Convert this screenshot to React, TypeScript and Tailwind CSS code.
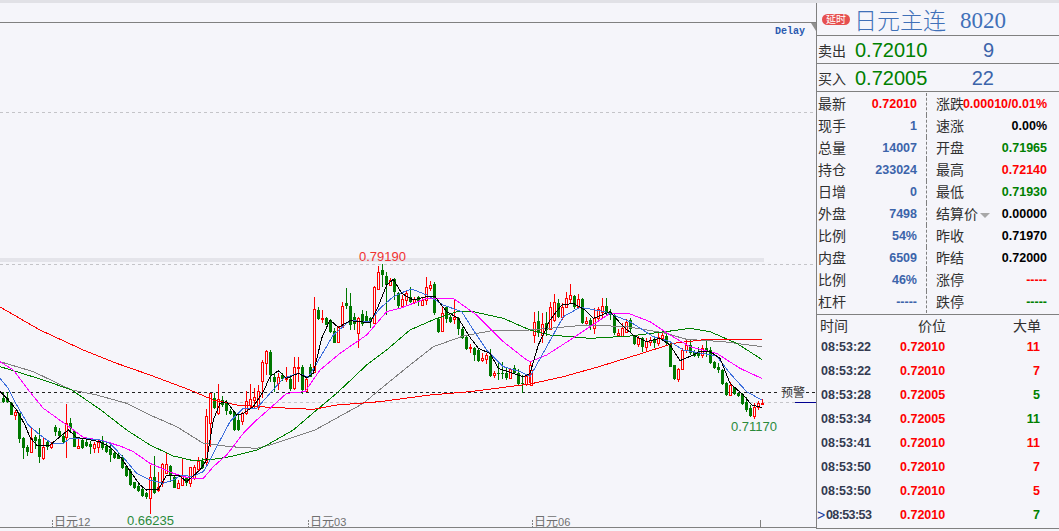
import React from 'react'

type Candle = [number, number, number, number, number, number]
type Pt = [number, number]

const cjk = '"Noto Sans CJK SC", "Liberation Sans", sans-serif'
const BG = '#f5f5fa'

// candles: [zoomX, isRed, high, bodyTop, bodyBottom, low] read from 3x crops
const panelA: Candle[] = [
  [8,0,125,145,155,158],[20,0,125,145,155,158],[32,0,155,160,195,196],[44,1,180,185,195,210],[56,0,190,190,268,278],
  [68,0,262,265,293,328],[80,0,285,292,305,318],[92,1,232,265,305,306],[104,0,255,260,272,298],[116,0,235,268,320,338],
  [128,1,262,290,325,330],[140,0,270,275,290,300],[152,1,275,283,290,298],[164,0,225,232,245,258],[176,0,235,242,258,262],
  [188,0,250,258,275,278],[199,1,162,220,262,323],[211,0,205,220,235,250],[223,0,240,243,290,292],[235,1,265,288,295,297],
  [247,0,265,270,293,296],[259,0,268,275,288,292],[271,0,272,283,290,313],[283,1,275,283,293,310],[295,1,270,275,290,310],
  [307,0,258,275,295,300],[319,0,280,288,305,308],[331,0,285,298,315,335],[343,0,305,308,325,326],[355,0,310,316,327,328],
  [367,0,315,322,355,358],[379,0,345,348,378,380],[391,0,358,362,405,408],[403,0,395,396,413,416],[415,0,398,408,423,425],
  [427,0,415,417,438,440],[439,0,425,428,442,448],[451,1,345,380,443,493],[463,0,318,380,430,432],[475,1,365,412,420,425],
  [487,1,338,342,395,410],[499,1,310,342,370,372],[511,0,345,348,375,395],[523,0,378,381,413,415],[535,1,390,398,413,414],
  [547,1,328,378,405,406],[559,0,380,385,400,408],[571,1,350,352,400,410],[583,1,345,352,385,390],[595,1,322,334,358,365],
  [607,0,325,333,355,358],[619,1,178,198,335,345],[631,1,128,130,220,290],[643,0,130,145,175,178],[655,1,102,148,190,196],
  [667,0,138,150,165,170],[679,0,150,158,182,195],[691,0,178,182,192,195],[703,0,185,185,240,243],[715,0,190,210,240,242],
  [727,1,185,190,212,225],[739,1,122,152,190,195],[751,1,102,148,165,175],[763,1,115,142,150,178],[775,1,105,122,170,180],
  [787,1,30,37,92,145],[799,1,0,3,40,75],
]

const panelB: Candle[] = [
  [1,0,300,305,375,395],[13,0,370,382,395,425],[25,1,370,382,398,420],[37,0,368,375,388,392],[49,1,350,385,388,395],
  [61,0,380,388,418,422],[73,1,322,352,415,420],[85,1,320,350,355,395],[97,0,345,350,420,432],[109,1,380,388,422,425],
  [121,0,342,352,380,382],[133,1,142,178,365,368],[145,0,170,180,208,210],[157,1,180,203,205,218],[169,0,200,205,225,226],
  [181,0,208,210,245,248],[193,0,235,242,278,280],[205,1,228,232,275,278],[217,1,155,168,232,235],[229,0,115,160,167,178],
  [241,0,130,168,225,240],[253,0,188,200,222,240],[265,1,200,205,250,293],[277,0,180,192,222,228],[289,0,182,198,215,218],
  [301,0,200,205,215,235],[313,1,108,112,220,222],[325,1,48,65,118,120],[337,0,42,60,75,112],[349,0,65,78,105,195],
  [361,1,85,90,105,108],[373,0,85,88,125,150],[385,0,125,130,168,175],[397,1,135,148,168,170],[409,1,122,130,150,165],
  [421,0,110,140,155,160],[433,1,140,148,155,162],[445,0,138,142,155,168],[457,1,140,150,165,168],[469,1,82,112,150,165],
  [481,1,92,105,115,122],[493,0,95,103,190,195],[505,0,200,208,245,250],[517,1,170,190,243,245],[529,0,170,172,207,220],
  [541,0,195,200,215,218],[553,1,150,200,207,222],[565,0,200,205,237,255],[577,0,232,237,265,268],[589,0,258,262,298,300],
  [601,1,282,290,295,308],[613,0,290,295,315,333],[625,0,298,300,332,335],[637,1,310,325,330,335],[649,1,310,315,328,342],
  [661,0,298,318,378,380],[673,1,362,368,375,385],[685,0,335,368,372,390],[697,0,335,368,372,388],[709,0,350,368,385,390],
  [721,1,355,358,385,388],[733,0,345,355,370,372],[745,0,358,368,402,408],[757,0,375,398,402,428],[769,1,372,378,402,408],
  [781,1,335,345,395,400],
]

const panelC: Candle[] = [
  [2,1,300,300,345,346],[13,1,125,155,195,218],[25,0,122,152,190,200],[37,1,130,162,195,218],[49,0,125,160,180,198],
  [61,1,95,110,178,180],[73,1,72,97,150,155],[85,0,88,98,140,145],[97,1,100,112,142,150],[109,1,65,85,110,115],
  [121,1,42,75,88,100],[133,0,75,78,110,118],[145,1,72,88,112,115],[157,0,85,88,160,162],[169,1,140,153,160,168],
  [181,0,145,150,165,180],[193,1,115,145,175,192],[205,1,110,118,145,152],[217,1,85,108,125,145],[229,0,85,108,130,135],
  [241,0,118,125,135,150],[253,0,130,135,190,195],[265,1,178,190,195,198],[277,1,160,175,198,200],[289,1,148,155,185,190],
  [301,0,145,150,178,185],[313,0,195,198,222,225],[325,1,198,205,222,232],[337,0,200,205,230,245],[349,1,205,212,232,245],
  [361,1,200,210,215,228],[373,0,205,210,218,235],[385,1,190,200,218,228],[397,1,180,195,205,208],[409,0,185,198,218,225],
  [421,0,220,222,290,292],[433,0,285,286,328,330],[445,1,295,298,328,335],[457,1,235,240,298,300],[469,1,210,225,240,250],
  [481,0,210,225,248,255],[493,0,240,245,258,262],[505,0,232,250,258,265],[517,1,225,235,255,265],[529,0,208,235,245,262],
  [541,0,232,240,280,282],[553,0,272,275,293,298],[565,0,278,290,300,310],[577,0,298,300,342,345],[589,0,335,340,375,377],
  [601,1,335,345,375,377],[613,0,350,352,372,375],[625,0,368,370,378,382],[637,0,368,372,402,405],[649,0,380,396,420,425],
  [661,0,405,415,438,442],[673,1,400,412,438,448],[685,1,393,398,412,420],[697,1,388,398,401,403],
]

// moving averages, same crop coordinates; the three crops are joined into one line
const crop = (x0: number, y0: number, p: number[]) => {
  const out: Pt[] = []
  for (let i = 0; i < p.length; i += 2) out.push([x0 + p[i] / 3, y0 + p[i + 1] / 3])
  return out
}

const join = (a: Pt[], b: Pt[], c: Pt[]) =>
  [...a, ...b.filter((p) => p[0] < 530 && (a.length === 0 || p[0] > a[a.length - 1][0])), ...c]
    .map((p) => p.join(','))
    .join(' ')

const averages = [
  { color: '#808080', points: join(
    crop(0, 350, [0,35,100,65,215,120,290,135,380,160,450,195,530,230,610,280,690,290,770,295,810,285]),
    crop(270, 250, [135,540,280,460,340,410,420,345,490,290,580,258,660,243,810,243]),
    crop(530, 270, [0,180,170,165,290,170,400,188,470,208,580,215,695,230]),
  ) },
  { color: '#008000', points: join(
    crop(0, 350, [0,50,50,65,130,90,215,120,300,178,380,240,450,285,520,318,580,332,640,328,690,320,770,300,810,280]),
    crop(270, 250, [70,540,140,480,200,430,290,345,350,300,420,240,500,205,560,185,600,183,700,205,780,240,810,240]),
    crop(530, 270, [0,180,60,195,180,205,300,198,430,182,480,175,540,185,620,220,695,268]),
  ) },
  { color: '#ff0000', points: join(
    [[0,307],[40,330],...crop(0, 350, [250,0,350,40,450,75,570,120,640,150,710,165,810,172])],
    crop(270, 250, [130,478,200,465,330,455,480,435,600,425,810,398]),
    crop(530, 270, [0,342,100,320,200,292,320,255,430,220,530,208,695,207]),
  ) },
  { color: '#ff00ff', points: join(
    crop(0, 350, [0,35,40,60,85,120,130,175,200,225,250,262,310,272,365,290,400,305,450,340,520,370,570,385,610,385,640,350,680,315,730,250,770,210,810,175]),
    crop(270, 250, [50,430,105,425,150,360,210,310,290,255,350,185,390,175,470,145,550,145,620,195,700,275,770,330,810,335]),
    crop(530, 270, [0,275,50,255,120,210,180,170,240,130,300,132,360,155,420,195,480,230,560,250,630,295,695,325]),
  ) },
  { color: '#3c6edc', points: join(
    crop(0, 350, [0,85,25,115,50,165,85,225,120,255,155,280,190,280,210,265,250,265,300,270,330,280,370,322,410,370,450,390,490,400,520,390,545,375,575,380,610,365,625,340,650,290,690,215,730,175,770,175,810,130]),
    crop(270, 250, [0,425,40,385,85,370,115,382,140,340,190,255,240,212,300,215,330,175,370,140,395,128,425,117,470,135,520,165,575,185,610,240,650,300,700,350,750,365,785,373,810,340]),
    crop(530, 270, [0,320,50,230,100,140,150,112,225,125,300,155,370,200,420,215,460,240,560,258,600,310,650,365,695,390]),
  ) },
  { color: '#000000', points: join(
    crop(0, 350, [0,125,25,150,50,180,75,225,90,262,110,285,150,285,180,260,205,240,230,262,300,275,330,292,365,325,395,370,420,405,440,420,475,418,500,375,535,375,560,395,600,360,620,330,640,210,660,160,680,155,710,195,730,190,760,170,790,125,810,80]),
    crop(270, 250, [25,362,50,385,85,370,110,383,130,370,155,265,180,210,205,232,240,212,300,218,320,180,350,105,370,88,395,130,430,150,470,140,495,140,530,185,565,205,600,262,625,295,660,310,685,355,730,370,760,380,780,373,810,305]),
    crop(530, 270, [0,310,25,225,60,150,95,105,130,100,165,120,190,145,240,125,280,170,310,195,350,215,390,205,420,225,450,272,490,255,510,243,540,245,570,265,600,340,640,375,665,405,695,412]),
  ) },
]

function Candles({ data, x0, y0 }: { data: Candle[]; x0: number; y0: number }) {
  return (
    <g shapeRendering="crispEdges">
      {data.map(([zx, isRed, h, t, b, l]) => {
        const c = Math.round(x0 + zx / 3)
        const color = isRed ? '#ff0000' : '#007800'
        const high = Math.round(y0 + h / 3)
        const top = Math.round(y0 + t / 3)
        const bottom = Math.round(y0 + b / 3)
        const low = Math.round(y0 + l / 3)
        return (
          <g key={zx}>
            <rect x={c} y={high} width={1} height={Math.max(low - high, 1)} fill={color} />
            {isRed ? (
              <rect x={c - 0.5} y={top + 0.5} width={2} height={Math.max(bottom - top, 1)} fill={BG} stroke={color} />
            ) : (
              <rect x={c - 1} y={top} width={3} height={Math.max(bottom - top, 1)} fill={color} />
            )}
          </g>
        )
      })}
    </g>
  )
}

function AxisLabel({ left, day }: { left: string; day: string }) {
  return (
    <span className={`absolute ${left} top-[511px] text-[12px] leading-[14px] text-[#707070]`} style={{ fontFamily: cjk }}>
      日元<span className="font-['Liberation_Sans',sans-serif] text-[11px]">{day}</span>
    </span>
  )
}

function Chart() {
  return (
    <div className="relative w-[816px] shrink-0 overflow-hidden">
      <svg width={816} height={528} viewBox="0 3 816 528" className="block">
        <rect x={0} y={258} width={764} height={4} fill="#e4e4ea" />
        <g shapeRendering="crispEdges">
          <line x1={0} x2={816} y1={22.5} y2={22.5} stroke="#808080" />
          <line x1={0} x2={816} y1={112.5} y2={112.5} stroke="#c4c4c8" strokeDasharray="3 3" />
          <line x1={0} x2={816} y1={264.5} y2={264.5} stroke="#c4c4c8" strokeDasharray="3 3" />
          <line x1={0} x2={780} y1={392.5} y2={392.5} stroke="#202020" strokeDasharray="3 3" />
          <line x1={806} x2={816} y1={392.5} y2={392.5} stroke="#202020" strokeDasharray="3 3" />
          <line x1={0} x2={795} y1={402.5} y2={402.5} stroke="#c4c4c8" strokeDasharray="3 3" />
          <line x1={795} x2={816} y1={402.5} y2={402.5} stroke="#000090" />
          <line x1={0} x2={816} y1={527.5} y2={527.5} stroke="#808080" />
          <line x1={52.5} x2={52.5} y1={520} y2={527} stroke="#808080" strokeDasharray="2 1" />
          <line x1={308.5} x2={308.5} y1={520} y2={527} stroke="#808080" strokeDasharray="2 1" />
          <line x1={532.5} x2={532.5} y1={520} y2={527} stroke="#808080" strokeDasharray="2 1" />
          <line x1={760.5} x2={760.5} y1={520} y2={527} stroke="#808080" />
        </g>
        <path d="M811 23 L816 23 L816 31 Z" fill="#909090" />
        <Candles data={panelA} x0={0} y0={350} />
        <Candles data={panelB} x0={270} y0={250} />
        <Candles data={panelC} x0={530} y0={270} />
        {averages.map((a) => (
          <polyline key={a.color} points={a.points} fill="none" stroke={a.color} strokeWidth={1} shapeRendering="crispEdges" />
        ))}
      </svg>
      <span className="absolute left-[775px] top-[23px] text-[10px] font-bold leading-[12px] text-[#2a5ab0] font-['Liberation_Mono',monospace]">Delay</span>
      <span className="absolute left-[359px] top-[247px] text-[13px] leading-[14px] text-[#f03030] font-['Liberation_Sans',sans-serif]">0.79190</span>
      <span className="absolute left-[731px] top-[417px] text-[13px] leading-[14px] text-[#2a8a3a] font-['Liberation_Sans',sans-serif]">0.71170</span>
      <span className="absolute left-[127px] top-[511px] text-[13px] leading-[14px] text-[#2a8a3a] font-['Liberation_Sans',sans-serif]">0.66235</span>
      <span className="absolute left-[781px] top-[382px] text-[12px] leading-[14px] text-[#303030]" style={{ fontFamily: cjk }}>预警</span>
      <AxisLabel left="left-[54px]" day="12" />
      <AxisLabel left="left-[310px]" day="03" />
      <AxisLabel left="left-[534px]" day="06" />
    </div>
  )
}

const quoteRows = [
  ['最新', '0.72010', 'text-[#ff0000]', '涨跌', '0.00010/0.01%', 'text-[#ff0000]'],
  ['现手', '1', 'text-[#3c64aa]', '速涨', '0.00%', 'text-[#000000]'],
  ['总量', '14007', 'text-[#3c64aa]', '开盘', '0.71965', 'text-[#008000]'],
  ['持仓', '233024', 'text-[#3c64aa]', '最高', '0.72140', 'text-[#ff0000]'],
  ['日增', '0', 'text-[#3c64aa]', '最低', '0.71930', 'text-[#008000]'],
  ['外盘', '7498', 'text-[#3c64aa]', '结算价', '0.00000', 'text-[#000000]'],
  ['比例', '54%', 'text-[#3c64aa]', '昨收', '0.71970', 'text-[#000000]'],
  ['内盘', '6509', 'text-[#3c64aa]', '昨结', '0.72000', 'text-[#000000]'],
  ['比例', '46%', 'text-[#3c64aa]', '涨停', '-----', 'text-[#ff0000]'],
  ['杠杆', '-----', 'text-[#3c64aa]', '跌停', '-----', 'text-[#008000]'],
]

const trades = [
  ['08:53:22', '0.72010', '11', 'text-[#ff0000]'],
  ['08:53:22', '0.72010', '7', 'text-[#ff0000]'],
  ['08:53:28', '0.72005', '5', 'text-[#008000]'],
  ['08:53:34', '0.72005', '11', 'text-[#008000]'],
  ['08:53:41', '0.72010', '11', 'text-[#ff0000]'],
  ['08:53:50', '0.72010', '7', 'text-[#ff0000]'],
  ['08:53:50', '0.72010', '5', 'text-[#ff0000]'],
  ['08:53:53', '0.72010', '7', 'text-[#008000]'],
]

function BookRow({ label, price, size }: { label: string; price: string; size: string }) {
  return (
    <div className="flex h-[28px] items-center border-b border-[#808080] pl-[1px]">
      <span className="w-[37px] text-[14px] leading-none text-[#303030]" style={{ fontFamily: cjk }}>{label}</span>
      <span className="w-[74px] text-[20px] leading-none text-[#008000]">{price}</span>
      <span className="w-[65px] text-right text-[20px] leading-none text-[#3c64aa]">{size}</span>
    </div>
  )
}

function Sidebar() {
  return (
    <div className="flex h-[526px] flex-1 flex-col border-l border-[#808080] font-['Liberation_Sans',sans-serif]">
      {/* Title */}
      <div className="flex h-[33px] items-center border-b border-[#808080] pl-[5px]">
        <span className="flex h-[11px] w-[28px] shrink-0 items-center justify-center rounded-full bg-[#e65050] text-[10px] leading-none text-white" style={{ fontFamily: cjk }}>延时</span>
        <span className="ml-[4px] text-[23px] leading-none text-[#4070b8]" style={{ fontFamily: cjk, fontWeight: 300 }}>日元主连</span>
        <span className="ml-[14px] pt-[2px] text-[23px] leading-none text-[#4070b8] font-['Liberation_Serif',serif]">8020</span>
      </div>

      <BookRow label="卖出" price="0.72010" size="9" />
      <BookRow label="买入" price="0.72005" size="22" />

      {/* Quote table */}
      <div className="flex h-[223px] flex-col border-b border-[#808080] pt-[1px]">
        {quoteRows.map(([l1, v1, c1, l2, v2, c2], i) => (
          <div key={l2} className="flex h-[22px] items-center">
            <div className="flex h-full w-[110px] items-center justify-between border-r border-dashed border-[#808080] pl-[1px] pr-[9px]">
              <span className="pb-[2px] text-[14px] leading-none text-[#303030]" style={{ fontFamily: cjk }}>{l1}</span>
              <span className={`text-[12.5px] font-bold leading-none ${c1}`}>{v1}</span>
            </div>
            <div className="relative flex h-full w-[120px] items-center justify-between pl-[9px]">
              <span className="shrink-0 whitespace-nowrap pb-[2px] text-[14px] leading-none text-[#303030]" style={{ fontFamily: cjk }}>{l2}</span>
              {i === 5 && <span className="absolute left-[53px] top-[10px] h-0 w-0 border-x-[5px] border-t-[5px] border-x-transparent border-t-[#a8a8a8]" />}
              <span className={`-ml-[3px] whitespace-nowrap text-[12.5px] font-bold leading-none ${c2}`}>{v2}</span>
            </div>
          </div>
        ))}
      </div>

      {/* Trades */}
      <div className="flex h-[20px] shrink-0 items-center text-[14px] leading-none text-[#303030]" style={{ fontFamily: cjk }}>
        <span className="ml-[3px] w-[98px]">时间</span>
        <span className="w-[95px]">价位</span>
        <span>大单</span>
      </div>
      <div className="flex flex-1 flex-col border-b border-[#808080]">
        {trades.map(([time, price, size, color], i) => {
          const last = i === trades.length - 1
          return (
            <div key={i} className="flex h-[24px] shrink-0 items-center text-[12.5px] font-bold leading-none">
              {last && <span className="w-[7px] text-[14px] font-normal text-[#2040a0]">&gt;</span>}
              {last ? (
                <span className="ml-[2px] w-[74px] tracking-[-0.6px] text-[#333a50]">{time}</span>
              ) : (
                <span className="ml-[4px] w-[79px] text-[#333a50]">{time}</span>
              )}
              <span className="w-[60px] text-[#ff0000]">{price}</span>
              <span className={`w-[80px] text-right ${color}`}>{size}</span>
            </div>
          )
        })}
      </div>
    </div>
  )
}

export default function App() {
  return (
    <div className="h-[531px] w-[1059px] overflow-hidden bg-[#f5f5fa]">
      <div className="h-[3px] bg-[#e1e1e6]" />
      <div className="flex">
        <Chart />
        <Sidebar />
      </div>
    </div>
  )
}
